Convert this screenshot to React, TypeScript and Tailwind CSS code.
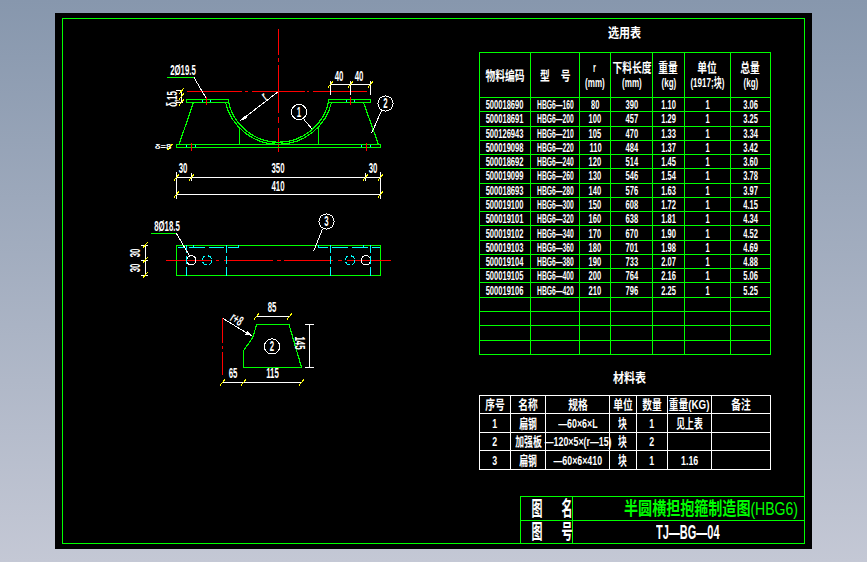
import type { ReactNode } from 'react'

const GREEN = '#00ff00'
const RED = '#ff0000'
const CYAN = '#00ffff'
const YELLOW = '#ffff00'
const WHITE = '#ffffff'

const SELECTION_ROWS = [
  ['500018690', 'HBG6—160', '80', '390', '1.10', '1', '3.06'],
  ['500018691', 'HBG6—200', '100', '457', '1.29', '1', '3.25'],
  ['500126943', 'HBG6—210', '105', '470', '1.33', '1', '3.34'],
  ['500019098', 'HBG6—220', '110', '484', '1.37', '1', '3.42'],
  ['500018692', 'HBG6—240', '120', '514', '1.45', '1', '3.60'],
  ['500019099', 'HBG6—260', '130', '546', '1.54', '1', '3.78'],
  ['500018693', 'HBG6—280', '140', '576', '1.63', '1', '3.97'],
  ['500019100', 'HBG6—300', '150', '608', '1.72', '1', '4.15'],
  ['500019101', 'HBG6—320', '160', '638', '1.81', '1', '4.34'],
  ['500019102', 'HBG6—340', '170', '670', '1.90', '1', '4.52'],
  ['500019103', 'HBG6—360', '180', '701', '1.98', '1', '4.69'],
  ['500019104', 'HBG6—380', '190', '733', '2.07', '1', '4.88'],
  ['500019105', 'HBG6—400', '200', '764', '2.16', '1', '5.06'],
  ['500019106', 'HBG6—420', '210', '796', '2.25', '1', '5.25'],
  ['', '', '', '', '', '', ''],
  ['', '', '', '', '', '', ''],
  ['', '', '', '', '', '', ''],
  ['', '', '', '', '', '', ''],
]

const SELECTION_WIDTHS = [51, 49, 31, 42, 32, 46, 40]

const MATERIAL_ROWS = [
  ['1', '扁钢', '—60×6×L', '块', '1', '见上表', ''],
  ['2', '加强板', '—120×5×(r—15)', '块', '2', '', ''],
  ['3', '扁钢', '—60×6×410', '块', '1', '1.16', ''],
]

const MATERIAL_WIDTHS = [31, 35, 64, 26, 31, 44, 59]

// squeezed like the CAD shx font, centred even when wider than its cell
function Squeezed({ children, className = 'scale-x-[0.58]' }: { children: ReactNode; className?: string }) {
  return (
    <div className="flex justify-center">
      <span className={`inline-block shrink-0 whitespace-nowrap ${className}`}>{children}</span>
    </div>
  )
}

function Line({ p, c = GREEN, w = 1.2 }: { p: number[]; c?: string; w?: number }) {
  return <line x1={p[0]} y1={p[1]} x2={p[2]} y2={p[3]} stroke={c} strokeWidth={w} />
}

function Tick({ x, y }: { x: number; y: number }) {
  return <line x1={x - 2.5} y1={y + 3} x2={x + 2.5} y2={y - 3} stroke={YELLOW} strokeWidth={1} />
}

function Label({ x, y, t, r = 0, sx = 0.56, size = 14 }: { x: number; y: number; t: string; r?: number; sx?: number; size?: number }) {
  return (
    <text
      transform={`translate(${x} ${y}) rotate(${r}) scale(${sx} 1)`}
      textAnchor="middle"
      dominantBaseline="central"
      fill={WHITE}
      fontSize={size}
      fontWeight={700}
      fontFamily="'Liberation Sans', 'Noto Sans CJK SC', sans-serif"
    >
      {t}
    </text>
  )
}

function Balloon({ x, y, t }: { x: number; y: number; t: string }) {
  return (
    <g>
      <circle cx={x} cy={y} r={7.6} fill="none" stroke={WHITE} strokeWidth={1} />
      <Label x={x} y={y} t={t} />
    </g>
  )
}

function Dashes({ segs, c = RED, w = 1.2 }: { segs: number[][]; c?: string; w?: number }) {
  return (
    <>
      {segs.map((s, i) => (
        <Line key={i} p={s} c={c} w={w} />
      ))}
    </>
  )
}

function cyanColumn(x: number) {
  return [
    [x, 245, x, 253],
    [x, 256, x, 264],
    [x, 267, x, 276],
  ]
}

function Drawing() {
  return (
    <svg viewBox="63 19 416 524" className="h-[524px] w-[416px] shrink-0" shapeRendering="crispEdges" fill="none">
      {/* front view */}
      <Dashes
        segs={[
          [278.5, 29, 278.5, 55],
          [278.5, 58, 278.5, 62],
          [278.5, 65, 278.5, 113],
          [278.5, 117, 278.5, 123],
          [278.5, 128, 278.5, 152],
          [187, 91.5, 242, 91.5],
          [245, 91.5, 248, 91.5],
          [252, 91.5, 305, 91.5],
          [307, 91.5, 309, 91.5],
          [313, 91.5, 367, 91.5],
        ]}
      />
      <rect x={186.5} y={99.5} width={42} height={3} stroke={GREEN} strokeWidth={1.2} />
      <rect x={328.5} y={99.5} width={42} height={3} stroke={GREEN} strokeWidth={1.2} />
      <rect x={176.5} y={144.5} width={204} height={3} stroke={GREEN} strokeWidth={1.2} />
      <path d="M228 99.5 A51.2 51.2 0 0 0 329 99.5" stroke={GREEN} strokeWidth={1.2} />
      <path d="M225.5 102.5 A54.5 54.5 0 0 0 331.5 102.5" stroke={GREEN} strokeWidth={1.2} />
      <Line p={[193.5, 102.5, 179, 144.5]} />
      <Line p={[363.5, 102.5, 378.5, 144.5]} />
      <Line p={[239.5, 127, 239.5, 144.5]} />
      <Line p={[318.5, 127, 318.5, 144.5]} />
      <Dashes
        c={CYAN}
        segs={[
          [202.5, 100, 202.5, 102],
          [210.5, 100, 210.5, 102],
          [346.5, 100, 346.5, 102],
          [354.5, 100, 354.5, 102],
          [186.5, 145, 186.5, 147],
          [195.5, 145, 195.5, 147],
          [361.5, 145, 361.5, 147],
          [370.5, 145, 370.5, 147],
        ]}
      />
      <Dashes
        segs={[
          [206.5, 97, 206.5, 105],
          [350.5, 97, 350.5, 105],
          [191.5, 143, 191.5, 151],
          [366.5, 143, 366.5, 151],
        ]}
      />
      <Line p={[167, 77.5, 194, 77.5]} />
      <Line p={[194, 77.5, 206, 98]} c={WHITE} w={1} />
      <Label x={183} y={70} t="2Ø19.5" />
      <Line p={[330.5, 84.5, 370.5, 84.5]} c={WHITE} w={1} />
      <Line p={[330.5, 81, 330.5, 95]} c={WHITE} w={1} />
      <Line p={[350.5, 81, 350.5, 95]} c={WHITE} w={1} />
      <Line p={[370.5, 81, 370.5, 95]} c={WHITE} w={1} />
      <Tick x={330.5} y={84.5} />
      <Tick x={350.5} y={84.5} />
      <Tick x={370.5} y={84.5} />
      <Label x={339} y={76} t="40" />
      <Label x={359} y={76} t="40" />
      <Line p={[278.5, 91.5, 240, 121]} c={WHITE} w={1} />
      <path d="M239 121.5 L245 115 L247.5 118 Z" fill={WHITE} />
      <Label x={264} y={96} t="r" r={-38} />
      <Balloon x={299} y={112} t="1" />
      <Line p={[304, 119.5, 312.5, 129.5]} c={WHITE} w={1} />
      <Balloon x={385.5} y={103.5} t="2" />
      <Line p={[381.5, 110.5, 371.5, 133.5]} c={WHITE} w={1} />
      <Line p={[181.5, 91, 181.5, 103]} c={WHITE} w={1} />
      <Line p={[176, 90.5, 183, 90.5]} c={WHITE} w={1} />
      <Line p={[176, 102.5, 183, 102.5]} c={WHITE} w={1} />
      <Tick x={181.5} y={91} />
      <Tick x={181.5} y={96.5} />
      <Tick x={181.5} y={102.5} />
      <Label x={172} y={99} t="δ,15" r={-90} />
      <Label x={163} y={146.5} t="δ=8" size={8} sx={1.2} />
      <Tick x={170} y={147} />

      {/* overall dimensions */}
      <Line p={[176.5, 177.5, 380.5, 177.5]} c={WHITE} w={1} />
      <Line p={[176.5, 194.5, 380.5, 194.5]} c={WHITE} w={1} />
      <Line p={[176.5, 172, 176.5, 199]} c={WHITE} w={1} />
      <Line p={[380.5, 172, 380.5, 199]} c={WHITE} w={1} />
      <Line p={[191.5, 173, 191.5, 181]} c={WHITE} w={1} />
      <Line p={[365.5, 173, 365.5, 181]} c={WHITE} w={1} />
      <Tick x={176.5} y={177.5} />
      <Tick x={191.5} y={177.5} />
      <Tick x={365.5} y={177.5} />
      <Tick x={380.5} y={177.5} />
      <Tick x={176.5} y={194.5} />
      <Tick x={380.5} y={194.5} />
      <Label x={183} y={168} t="30" />
      <Label x={278} y={168} t="350" />
      <Label x={373} y={168} t="30" />
      <Label x={278} y={186} t="410" />

      {/* plan view */}
      <rect x={176.5} y={245.5} width={204} height={30} stroke={GREEN} strokeWidth={1.2} />
      <Dashes
        w={1}
        segs={[
          [166, 260.5, 211, 260.5],
          [216, 260.5, 219, 260.5],
          [224, 260.5, 273, 260.5],
          [277, 260.5, 281, 260.5],
          [284, 260.5, 333, 260.5],
          [338, 260.5, 342, 260.5],
          [347, 260.5, 391, 260.5],
        ]}
      />
      <circle cx={191.3} cy={260.3} r={4.7} stroke={WHITE} strokeWidth={1} />
      <circle cx={366} cy={260.3} r={4.7} stroke={WHITE} strokeWidth={1} />
      <circle cx={207} cy={260.3} r={4.7} stroke={CYAN} strokeWidth={1} strokeDasharray="5 2.5" />
      <circle cx={350} cy={260.3} r={4.7} stroke={CYAN} strokeWidth={1} strokeDasharray="5 2.5" />
      <Dashes c={CYAN} segs={cyanColumn(186.5)} />
      <Dashes c={CYAN} segs={cyanColumn(226.5)} />
      <Dashes c={CYAN} segs={cyanColumn(330.5)} />
      <Dashes c={CYAN} segs={cyanColumn(370.5)} />
      <Dashes
        c={CYAN}
        segs={[
          [178, 247.5, 185, 247.5],
          [189, 247.5, 205, 247.5],
          [209, 247.5, 224, 247.5],
          [228, 247.5, 238, 247.5],
          [319, 247.5, 328, 247.5],
          [332, 247.5, 348, 247.5],
          [352, 247.5, 368, 247.5],
          [372, 247.5, 380, 247.5],
          [238.5, 245, 238.5, 247.5],
          [318.5, 245, 318.5, 247.5],
          [193.5, 245, 193.5, 247.5],
          [363.5, 245, 363.5, 247.5],
        ]}
      />
      <Line p={[151, 233.5, 176.5, 233.5]} />
      <Line p={[176.5, 233.5, 189, 255]} c={WHITE} w={1} />
      <Label x={167} y={226} t="8Ø18.5" />
      <Balloon x={326.5} y={221.5} t="3" />
      <Line p={[322.5, 229, 313.5, 251.5]} c={WHITE} w={1} />
      <Line p={[145.5, 245.5, 145.5, 275.5]} c={WHITE} w={1} />
      <Line p={[141, 245.5, 148, 245.5]} c={WHITE} w={1} />
      <Line p={[141, 260.5, 148, 260.5]} c={WHITE} w={1} />
      <Line p={[141, 275.5, 148, 275.5]} c={WHITE} w={1} />
      <Tick x={145} y={245.5} />
      <Tick x={145} y={260.5} />
      <Tick x={145} y={275.5} />
      <Label x={135} y={253} t="30" r={-90} />
      <Label x={135} y={268} t="30" r={-90} />

      {/* gusset */}
      <Dashes
        segs={[
          [222.5, 318, 222.5, 343],
          [222.5, 346, 222.5, 349],
          [222.5, 352, 222.5, 375],
        ]}
      />
      <path d="M256.7 324.5 L289 324.5 L301.5 367.5 L243.7 367.5 L243.7 350.3 L252.7 337.7 Z" stroke={GREEN} strokeWidth={1.2} />
      <Line p={[256.5, 316.5, 289.5, 316.5]} c={WHITE} w={1} />
      <Tick x={256.5} y={316.5} />
      <Tick x={289.5} y={316.5} />
      <Label x={272} y={307} t="85" />
      <Line p={[309.5, 324.5, 309.5, 367.5]} c={WHITE} w={1} />
      <Line p={[305, 324.5, 314, 324.5]} c={WHITE} w={1} />
      <Line p={[305, 367.5, 314, 367.5]} c={WHITE} w={1} />
      <Label x={300} y={343} t="145" r={90} />
      <Line p={[223, 318.5, 251, 335.5]} c={WHITE} w={1} />
      <path d="M252 336 L245 334.5 L247 331 Z" fill={WHITE} />
      <Label x={237} y={319} t="r+8" r={33} />
      <Balloon x={272} y={346.5} t="2" />
      <Line p={[222.5, 382.5, 301.5, 382.5]} c={WHITE} w={1} />
      <Tick x={222.5} y={382.5} />
      <Tick x={243.5} y={382.5} />
      <Tick x={301.5} y={382.5} />
      <Label x={233} y={373} t="65" />
      <Label x={272.5} y={373} t="115" />
    </svg>
  )
}

function SelectionTable() {
  return (
    <table className="w-[292px] table-fixed border-collapse">
      <colgroup>
        {SELECTION_WIDTHS.map((w, i) => (
          <col key={i} span={1} width={w} />
        ))}
      </colgroup>
      <thead>
        <tr className="h-[45px]">
          <th className="border border-[#00ff00] p-0 font-bold"><Squeezed className="scale-x-[0.75]">物料编码</Squeezed></th>
          <th className="border border-[#00ff00] p-0 font-bold"><Squeezed className="scale-x-[0.75]">型&nbsp;&nbsp;&nbsp;&nbsp;号</Squeezed></th>
          <th className="border border-[#00ff00] p-0 font-bold"><Squeezed>r</Squeezed><div className="mt-[2px]"><Squeezed className="scale-x-[0.62]">(mm)</Squeezed></div></th>
          <th className="border border-[#00ff00] p-0 font-bold"><Squeezed className="scale-x-[0.75]">下料长度</Squeezed><div className="mt-[2px]"><Squeezed className="scale-x-[0.62]">(mm)</Squeezed></div></th>
          <th className="border border-[#00ff00] p-0 font-bold"><Squeezed className="scale-x-[0.75]">重量</Squeezed><div className="mt-[2px]"><Squeezed className="scale-x-[0.62]">(kg)</Squeezed></div></th>
          <th className="border border-[#00ff00] p-0 font-bold"><Squeezed className="scale-x-[0.75]">单位</Squeezed><div className="mt-[2px]"><Squeezed className="scale-x-[0.62]">(1917;块)</Squeezed></div></th>
          <th className="border border-[#00ff00] p-0 font-bold"><Squeezed className="scale-x-[0.75]">总量</Squeezed><div className="mt-[2px]"><Squeezed className="scale-x-[0.62]">(kg)</Squeezed></div></th>
        </tr>
      </thead>
      <tbody>
        {SELECTION_ROWS.map((row, i) => (
          <tr key={i} className="h-[14.27px]">
            {row.map((cell, j) => (
              <td key={j} className="border border-[#00ff00] p-0 font-bold">
                <Squeezed className={j === 1 ? 'scale-x-[0.52]' : 'scale-x-[0.58]'}>{cell}</Squeezed>
              </td>
            ))}
          </tr>
        ))}
      </tbody>
    </table>
  )
}

function MaterialTable() {
  return (
    <table className="w-[292px] table-fixed border-collapse">
      <colgroup>
        {MATERIAL_WIDTHS.map((w, i) => (
          <col key={i} span={1} width={w} />
        ))}
      </colgroup>
      <thead>
        <tr className="h-[18.5px]">
          {['序号', '名称', '规格', '单位', '数量', '重量(KG)', '备注'].map((h) => (
            <th key={h} className="border border-white p-0 font-bold">
              <Squeezed className="scale-x-[0.75]">{h}</Squeezed>
            </th>
          ))}
        </tr>
      </thead>
      <tbody>
        {MATERIAL_ROWS.map((row, i) => (
          <tr key={i} className="h-[18.5px]">
            {row.map((cell, j) => (
              <td key={j} className="border border-white p-0 font-bold">
                <Squeezed className="scale-x-[0.68]">{cell}</Squeezed>
              </td>
            ))}
          </tr>
        ))}
      </tbody>
    </table>
  )
}

function TitleBlock() {
  return (
    <div className="ml-[41px] mt-auto flex h-[47px] flex-col border-l border-t border-[#00ff00]">
      <div className="flex h-[24px] border-b border-[#00ff00]">
        <div className="flex w-[52px] shrink-0 items-center gap-[10px] border-r border-[#00ff00] pl-[6px] text-[20px] font-bold">
          <span className="inline-block shrink-0 scale-x-[0.55]">图</span>
          <span className="inline-block shrink-0 scale-x-[0.55]">名</span>
        </div>
        <div className="flex flex-1 items-center justify-end pr-[6px] text-[18px] font-bold text-[#00ff00]">
          <span className="inline-block shrink-0 origin-right scale-x-[0.78] whitespace-nowrap">
            半圆横担抱箍制造图<span className="font-normal">(HBG6)</span>
          </span>
        </div>
      </div>
      <div className="flex flex-1">
        <div className="flex w-[52px] shrink-0 items-center gap-[10px] border-r border-[#00ff00] pl-[6px] text-[20px] font-bold">
          <span className="inline-block shrink-0 scale-x-[0.55]">图</span>
          <span className="inline-block shrink-0 scale-x-[0.55]">号</span>
        </div>
        <div className="flex flex-1 items-center justify-center pr-[2px] text-[20px] font-bold">
          <span className="inline-block shrink-0 scale-x-[0.55] whitespace-nowrap">TJ—BG—04</span>
        </div>
      </div>
    </div>
  )
}

export default function App() {
  return (
    <div className="h-[562px] w-[867px] overflow-hidden bg-gradient-to-b from-[#8797ad] to-[#c4c8d5] pl-[55px] pt-[13px] font-['Liberation_Sans','Noto_Sans_CJK_SC',sans-serif] text-[13px] leading-none text-white">
      <div className="h-[536px] w-[757px] bg-black pl-[7px] pt-[5px]">
        <div className="flex h-[526px] w-[743px] border border-[#00ff00]">
          <Drawing />
          <div className="flex flex-1 flex-col">
            <div className="h-[33px] w-[291px] pt-[7px] text-center font-bold">
              <Squeezed className="scale-x-[0.85]">选用表</Squeezed>
            </div>
            <SelectionTable />
            <div className="h-[40px] w-[291px] pt-[16px] font-bold">
              <div className="pl-[10px]">
                <Squeezed className="scale-x-[0.85]">材料表</Squeezed>
              </div>
            </div>
            <MaterialTable />
            <TitleBlock />
          </div>
        </div>
      </div>
    </div>
  )
}
